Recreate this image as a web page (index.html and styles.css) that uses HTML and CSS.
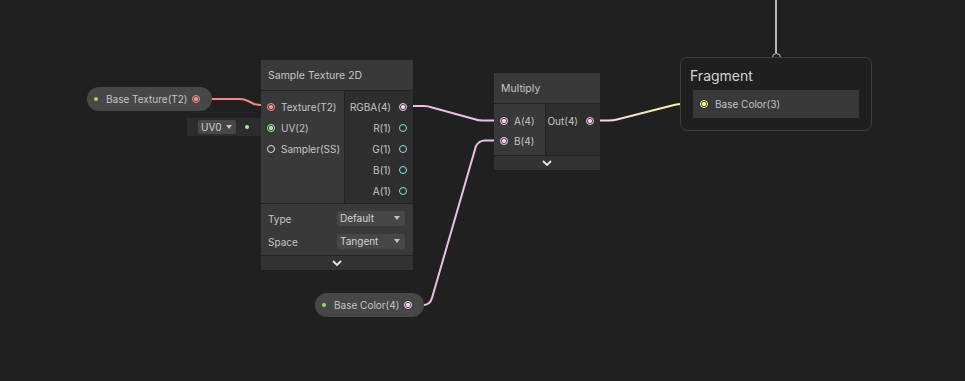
FILE: index.html
```html
<!DOCTYPE html>
<html>

<head>
    <title>Shader Graph</title>
    <meta charset='UTF-8'>
    <link rel="stylesheet" href="styles.css">
</head>

<body>
    <div class='graph'>
        <svg class='edges' width='965' height='381' viewBox='0 0 965 381'>
            <defs>
                <linearGradient id='outgrad' x1='0' y1='0' x2='1' y2='0'>
                    <stop offset='0' stop-color='#fbcbf4'></stop>
                    <stop offset='1' stop-color='#f6ff9a'></stop>
                </linearGradient>
            </defs>
            <path class='edge' d='M776 0 L776 53' stroke='#b8b8b8'></path>
            <path class='edge' d='M205 99 L240 99 Q244 99 248 101 L254 104 Q258 105 262 105 L271 105' stroke='#f08a8a'></path>
            <path class='edge' d='M252 127 L271 127' stroke='#9aef92'></path>
            <path class='edge' d='M402 106 L424 106 Q428 106 432 107.5 L474 119 Q478 120.5 482 120.5 L505 120.5' stroke='#ecbde8'></path>
            <path class='edge' d='M407 305 L423 305 Q430 305 432 298 L476 146 Q479 140.5 485 140.5 L505 140.5' stroke='#ecbde8'></path>
            <path class='edge' d='M589 120.5 L609 120.5 Q613 120.5 617 119.5 L674 105 Q678 104 682 104 L704 104' stroke='url(#outgrad)'></path>
        </svg>

        <div class='master-dot'></div>

        <div class='pill tex-pill'>
            <span class='exposed'></span>
            <span class='pill-label'>Base Texture(T2)</span>
            <span class='port tex connected'></span>
        </div>

        <div class='pill color-pill'>
            <span class='exposed'></span>
            <span class='pill-label'>Base Color(4)</span>
            <span class='port vec4 connected'></span>
        </div>

        <div class='inline-uv'>
            <div class='mini-drop'>UV0<span class='arrow'></span></div>
            <span class='green-dot'></span>
        </div>

        <div class='node sample'>
            <div class='node-title'>Sample Texture 2D</div>
            <div class='node-body'>
                <div class='inputs'>
                    <div class='slot'><span class='port tex connected'></span>Texture(T2)</div>
                    <div class='slot'><span class='port vec2 connected'></span>UV(2)</div>
                    <div class='slot'><span class='port sampler'></span>Sampler(SS)</div>
                </div>
                <div class='outputs'>
                    <div class='slot'>RGBA(4)<span class='port vec4 connected'></span></div>
                    <div class='slot'>R(1)<span class='port vec1'></span></div>
                    <div class='slot'>G(1)<span class='port vec1'></span></div>
                    <div class='slot'>B(1)<span class='port vec1'></span></div>
                    <div class='slot'>A(1)<span class='port vec1'></span></div>
                </div>
            </div>
            <div class='props'>
                <div class='prop'>
                    <span>Type</span>
                    <div class='drop'>Default <span class='arrow'></span></div>
                </div>
                <div class='prop'>
                    <span>Space</span>
                    <div class='drop'>Tangent <span class='arrow'></span></div>
                </div>
            </div>
            <div class='collapse'>
                <svg width='10' height='6' viewBox='0 0 10 6'><polyline points='1,1 5,5 9,1' fill='none' stroke='#e6e6e6' stroke-width='1.8'></polyline></svg>
            </div>
        </div>

        <div class='node multiply'>
            <div class='node-title'>Multiply</div>
            <div class='node-body'>
                <div class='inputs'>
                    <div class='slot'><span class='port vec4 connected'></span>A(4)</div>
                    <div class='slot'><span class='port vec4 connected'></span>B(4)</div>
                </div>
                <div class='outputs'>
                    <div class='slot'>Out(4)<span class='port vec4 connected'></span></div>
                </div>
            </div>
            <div class='collapse'>
                <svg width='10' height='6' viewBox='0 0 10 6'><polyline points='1,1 5,5 9,1' fill='none' stroke='#e6e6e6' stroke-width='1.8'></polyline></svg>
            </div>
        </div>

        <div class='fragment'>
            <div class='frag-title'>Fragment</div>
            <div class='frag-row'><span class='port vec3 connected'></span>Base Color(3)</div>
        </div>
    </div>
</body>

</html>
```

FILE: styles.css
```css
body {
    margin: 0;
    background-color: #202020;
    font-family: Inter, "Noto Sans", sans-serif;
    font-size: 10px;
    color: #c4c4c4;
}

.graph {
    position: relative;
    width: 965px;
    height: 381px;
    overflow: hidden;
}

.edges {
    position: absolute;
    top: 0;
    left: 0;
}

.edge {
    fill: none;
    stroke-width: 2;
}

.master-dot {
    position: absolute;
    left: 772px;
    top: 53px;
    width: 9px;
    height: 9px;
    box-sizing: border-box;
    border: 1.5px solid #c8c8c8;
    border-radius: 50%;
    background-color: #202020;
}

/* ports */
.port {
    width: 6px;
    height: 6px;
    border-radius: 50%;
    border: 1.2px solid #ccc;
    display: inline-block;
    flex: none;
    box-sizing: content-box;
}

.port.connected {
    background: radial-gradient(circle, var(--c) 0 1.8px, transparent 2.4px);
}

.port.tex { --c: #ff8b8b; border-color: #ff8b8b; }
.port.vec4 { --c: #fbcbf4; border-color: #fbcbf4; }
.port.vec3 { --c: #f6ff9a; border-color: #f6ff9a; }
.port.vec2 { --c: #9aef92; border-color: #9aef92; }
.port.vec1 { --c: #84e4e7; border-color: #84e4e7; }
.port.sampler { --c: #dcdcdc; border-color: #dcdcdc; }

/* property pills */
.pill {
    position: absolute;
    display: flex;
    align-items: center;
    height: 24px;
    background-color: #474747;
    border-radius: 12px;
    box-sizing: border-box;
    padding: 0 12px 0 7px;
    white-space: nowrap;
}

.tex-pill {
    left: 87px;
    top: 87px;
    width: 125px;
}

.color-pill {
    left: 315px;
    top: 293px;
    width: 109px;
}

.exposed {
    width: 4px;
    height: 4px;
    border-radius: 50%;
    background-color: #90e070;
    margin-right: 8px;
}

.pill-label {
    flex: 1;
}

/* inline uv field */
.inline-uv {
    position: absolute;
    left: 187px;
    top: 118px;
    width: 74px;
    height: 18px;
    background-color: #2c2c2c;
    display: flex;
    align-items: center;
    box-sizing: border-box;
    padding-left: 11px;
}

.mini-drop {
    width: 38px;
    height: 14px;
    line-height: 14px;
    background-color: #474747;
    border-radius: 2px;
    box-sizing: border-box;
    padding-left: 3px;
    position: relative;
    color: #d2d2d2;
}

.mini-drop .arrow {
    right: 4px;
}

.green-dot {
    width: 4px;
    height: 4px;
    border-radius: 50%;
    background-color: #9aef92;
    margin-left: 9px;
}

.arrow {
    position: absolute;
    right: 5px;
    top: 5px;
    width: 0;
    height: 0;
    border-left: 3.5px solid transparent;
    border-right: 3.5px solid transparent;
    border-top: 4px solid #c4c4c4;
}

/* nodes */
.node {
    position: absolute;
    background-color: #393939;
    display: flex;
    flex-direction: column;
    white-space: nowrap;
}

.sample {
    left: 261px;
    top: 60px;
    width: 152px;
}

.multiply {
    left: 494px;
    top: 73px;
    width: 106px;
}

.node-title {
    height: 30px;
    line-height: 31px;
    padding-left: 7px;
    font-size: 10.5px;
    border-bottom: 1px solid #232323;
    background-color: #393939;
}

.node-body {
    display: flex;
}

.inputs {
    background-color: #393939;
    padding: 5px 0 2px 6px;
}

.outputs {
    flex: 1;
    background-color: #2e2e2e;
    padding: 5px 6px 2px 0;
    border-left: 1px solid #232323;
}

.sample .inputs {
    width: 77px;
}

.multiply .inputs {
    width: 45px;
    padding-top: 7px;
    padding-bottom: 4px;
}

.multiply .outputs {
    padding-top: 7px;
}

.slot {
    height: 21px;
    display: flex;
    align-items: center;
    gap: 6px;
}

.multiply .slot {
    height: 20px;
}

.outputs .slot {
    justify-content: flex-end;
    gap: 8px;
}

.props {
    border-top: 1px solid #232323;
    padding: 7px 8px 6px 7px;
    display: flex;
    flex-direction: column;
    gap: 8px;
}

.prop {
    display: flex;
    align-items: center;
    justify-content: space-between;
    height: 15px;
}

.drop {
    position: relative;
    width: 68px;
    height: 15px;
    line-height: 15px;
    box-sizing: border-box;
    padding-left: 3px;
    background-color: #474747;
    border-radius: 2px;
    color: #d2d2d2;
}

.collapse {
    height: 14px;
    border-top: 1px solid #232323;
    background-color: #333333;
    display: flex;
    align-items: center;
    justify-content: center;
}

/* master stack */
.fragment {
    position: absolute;
    left: 680px;
    top: 57px;
    width: 192px;
    height: 74px;
    box-sizing: border-box;
    border: 1px solid #3d3d3d;
    border-radius: 7px;
    background-color: #1f1f1f;
    padding: 0 12px;
}

.frag-title {
    height: 32px;
    line-height: 35px;
    margin-left: -3px;
    font-size: 14px;
    color: #d2d2d2;
}

.frag-row {
    height: 28px;
    background-color: #393939;
    display: flex;
    align-items: center;
    padding-left: 7px;
    gap: 7px;
}
```
